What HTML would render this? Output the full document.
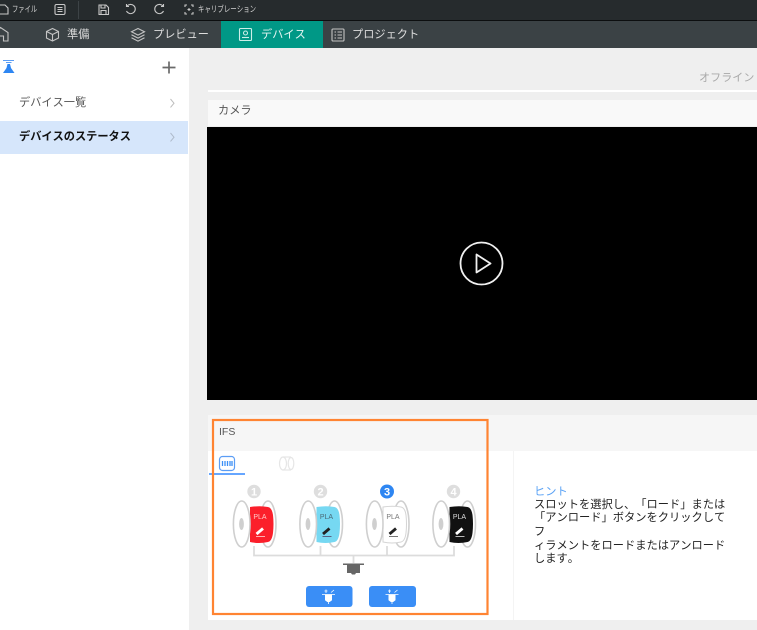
<!DOCTYPE html>
<html lang="ja"><head><meta charset="utf-8"><style>
*{box-sizing:border-box;margin:0;padding:0}
html,body{width:757px;height:630px;overflow:hidden;background:#efefef;font-family:"Liberation Sans","Noto Sans CJK JP",sans-serif;text-spacing-trim:space-all;font-kerning:none}
.a{position:absolute;white-space:nowrap}
svg{position:absolute;left:0;top:0}
</style></head><body>
<div class="a" style="left:0;top:0;width:757px;height:20px;background:#262b2d"></div>
<div class="a" style="left:0;top:20px;width:757px;height:1px;background:#0c0e0f"></div>
<div class="a" style="left:0;top:21px;width:757px;height:27px;background:#3b4245"></div>
<div class="a" style="left:221px;top:21px;width:102px;height:27px;background:#009886"></div>
<div class="a" style="left:12px;top:2px;font-size:8.5px;line-height:14px;color:#d4d4d4;transform:scaleX(.74);transform-origin:0 0">ファイル</div>
<div class="a" style="left:198px;top:2px;font-size:8.5px;line-height:14px;color:#d4d4d4;transform:scaleX(.76);transform-origin:0 0">キャリブレーション</div>
<div class="a" style="left:67px;top:27px;font-size:11.2px;line-height:16px;color:#ddd">準備</div>
<div class="a" style="left:153px;top:27px;font-size:11.2px;line-height:16px;color:#ddd">プレビュー</div>
<div class="a" style="left:261px;top:27px;font-size:11.2px;line-height:16px;color:#e4f5f2">デバイス</div>
<div class="a" style="left:352px;top:27px;font-size:11.2px;line-height:16px;color:#ddd">プロジェクト</div>

<div class="a" style="left:0;top:48px;width:189px;height:582px;background:#fff"></div>
<div class="a" style="left:0;top:121px;width:188px;height:33px;background:#d6e6fb"></div>
<div class="a" style="left:19px;top:95px;font-size:11.2px;line-height:17px;color:#555">デバイス一覧</div>
<div class="a" style="left:19px;top:130px;font-size:11.2px;line-height:15px;color:#111;font-weight:700">デバイスのステータス</div>

<div class="a" style="left:699px;top:70px;font-size:11px;line-height:16px;color:#a8a8a8;letter-spacing:.1px">オフライン</div>
<div class="a" style="left:208px;top:90px;width:549px;height:2px;background:#fff"></div>
<div class="a" style="left:208px;top:100px;width:549px;height:26px;background:#f9f9f9"></div>
<div class="a" style="left:218px;top:104px;font-size:11.2px;line-height:15px;color:#555">カメラ</div>
<div class="a" style="left:207px;top:127px;width:550px;height:273px;background:#000"></div>

<div class="a" style="left:208px;top:415px;width:549px;height:36px;background:#f6f6f6"></div>
<div class="a" style="left:208px;top:451px;width:549px;height:169px;background:#fff"></div>
<div class="a" style="left:513px;top:451px;width:1px;height:169px;background:#f4f4f4"></div>
<div class="a" style="left:219px;top:424px;font-size:10.5px;line-height:16px;color:#555">IFS</div>
<div class="a" style="left:534px;top:485.5px;font-size:11.25px;line-height:13.7px;color:#5aa2f5">ヒント</div>
<div class="a" style="left:534px;top:498.5px;font-size:11.25px;line-height:13.7px;color:#222">スロットを選択し、「ロード」または<br>「アンロード」ボタンをクリックして<br>フ<br>ィラメントをロードまたはアンロード<br>します。</div>

<svg width="757" height="630" viewBox="0 0 757 630" fill="none">
<!-- title bar icons -->
<g stroke="#c8c8c8" stroke-width="1.1">
<path d="M-1 5h6l3 3v6H-1z"/>
<rect x="55" y="4.500" width="10" height="10" rx="1.500"/><path d="M57.500 7.500h5M57.500 9.500h5M57.500 11.500h5"/>
<path d="M99 5h7l2.500 2.500V14.500H99zM101 5v3h4V5M101 14.500v-4h5v4"/>
<path d="M129 6.500h-2.500V4M126.800 6.500A4.600 4.600 0 1 1 126.500 11"/>
<path d="M161 6.500h2.500V4M163.200 6.500A4.600 4.600 0 1 0 163.500 11"/>
<path d="M185 7V5h2M191 5h2v2M193 12v2h-2M187 14h-2v-2"/><path d="M189 8v3M187.500 9.500h3"/>
</g>
<path d="M78.500 1v18" stroke="#3d4346"/>
<!-- tab icons -->
<g stroke="#c4c4c4" stroke-width="1.1">
<path d="M-3 32l3.500-4.500L8 32.500V41H3.500v-5H0"/>
<path d="M52.500 28.500l6 3v6.500l-6 3-6-3v-6.500zM46.500 31.500l6 3 6-3M52.500 34.500v6"/>
<path d="M138 28.500l6.500 3.300-6.500 3.300-6.500-3.300zM131.500 34.800l6.500 3.300 6.500-3.300M131.500 37.800l6.500 3.300 6.500-3.300"/>
<rect x="332" y="29" width="12" height="12" rx="1"/><path d="M334.500 32h1.500M337.500 32h4.500M334.500 35h1.500M337.500 35h4.500M334.500 38h1.500M337.500 38h4.500"/>
</g>
<g stroke="#cdeee8" stroke-width="1.1"><rect x="239.500" y="28.500" width="12" height="12" rx="1"/><circle cx="245.500" cy="33" r="2"/><path d="M242 37.500h7"/></g>
<!-- sidebar -->
<path d="M3 60.500h11M6 62.500h5.500" stroke="#5b9df5" stroke-width="1"/>
<path d="M7.500 64h2.500l1 4h-4.500zM6.500 68h4.500l3.500 5H3z" fill="#2e86f2"/>
<path d="M169 61.500v12M162.500 67.500h13" stroke="#6a6a6a" stroke-width="1.700"/>
<path d="M170.500 99l3.500 4.200-3.500 4.200" stroke="#bdbdbd"/><path d="M170.500 133l3.500 4.200-3.500 4.200" stroke="#aebaca"/>
<!-- play -->
<circle cx="481.500" cy="263.500" r="21" stroke="#f0f0f0" stroke-width="1.800"/>
<path d="M476.500 254.500v18l14-9z" stroke="#f0f0f0" stroke-width="1.800" stroke-linejoin="round"/>
<!-- tabs -->
<rect x="219.500" y="456.500" width="15" height="14" rx="3" stroke="#5b9df5" stroke-width="1.200"/>
<path d="M222.500 461v5M225 461v5M227.500 461v5M230 461v5M232 461v5" stroke="#3a8ef6" stroke-width="1.300"/>
<rect x="209" y="473" width="36" height="2" fill="#66a6ff"/>
<g stroke="#e6e6e6" stroke-width="1.200"><ellipse cx="283" cy="463.500" rx="3.500" ry="6.500"/><ellipse cx="291" cy="463.500" rx="2.800" ry="6"/><path d="M283 457h8M283 470h8"/></g>
<!-- connector -->
<path d="M254 546v9.500h200V546M320.500 546v9.500M387 546v9.500M353.500 555.500V563" stroke="#dcdcdc" stroke-width="1.800"/>
<path d="M343 563.500h21v1.500h-4v8h-4l-1 1.500h-3l-1-1.500h-4v-8h-4z" fill="#666"/>
<!-- spools -->
<g>
<ellipse cx="268" cy="524" rx="8" ry="23" fill="#fff" stroke="#cfcfcf" stroke-width="1.600"/>
<path d="M250 507q10-1.500 18 0 4 .8 5 8 1 9 0 18-1 8-5 9-9 2-18 0z" fill="#fb1f2b"/>
<ellipse cx="241.700" cy="524" rx="8.300" ry="23" fill="#fff" stroke="#cfcfcf" stroke-width="1.600"/>
<ellipse cx="241.500" cy="524" rx="2.400" ry="6" fill="#cfcfcf"/>
</g>
<g transform="translate(66.500 0)">
<ellipse cx="268" cy="524" rx="8" ry="23" fill="#fff" stroke="#cfcfcf" stroke-width="1.600"/>
<path d="M250 507q10-1.500 18 0 4 .8 5 8 1 9 0 18-1 8-5 9-9 2-18 0z" fill="#76d8f2"/>
<ellipse cx="241.700" cy="524" rx="8.300" ry="23" fill="#fff" stroke="#cfcfcf" stroke-width="1.600"/>
<ellipse cx="241.500" cy="524" rx="2.400" ry="6" fill="#cfcfcf"/>
</g>
<g transform="translate(133 0)">
<ellipse cx="268" cy="524" rx="8" ry="23" fill="#fff" stroke="#cfcfcf" stroke-width="1.600"/>
<path d="M250 507q10-1.500 18 0 4 .8 5 8 1 9 0 18-1 8-5 9-9 2-18 0z" fill="#fff" stroke="#d4d4d4"/>
<ellipse cx="241.700" cy="524" rx="8.300" ry="23" fill="#fff" stroke="#cfcfcf" stroke-width="1.600"/>
<ellipse cx="241.500" cy="524" rx="2.400" ry="6" fill="#cfcfcf"/>
</g>
<g transform="translate(199.500 0)">
<ellipse cx="268" cy="524" rx="8" ry="23" fill="#fff" stroke="#cfcfcf" stroke-width="1.600"/>
<path d="M250 507q10-1.500 18 0 4 .8 5 8 1 9 0 18-1 8-5 9-9 2-18 0z" fill="#111"/>
<ellipse cx="241.700" cy="524" rx="8.300" ry="23" fill="#fff" stroke="#cfcfcf" stroke-width="1.600"/>
<ellipse cx="241.500" cy="524" rx="2.400" ry="6" fill="#cfcfcf"/>
</g>
<g font-family="Liberation Sans,sans-serif" font-size="7" text-anchor="middle" textLength="12">
<text x="260" y="519" fill="#ffc8c8">PLA</text>
<text x="326.500" y="519" fill="#4a6a78">PLA</text>
<text x="393" y="519" fill="#777">PLA</text>
<text x="459.500" y="519" fill="#ddd">PLA</text>
</g>
<g stroke-width="2.800"><path d="M256.500 534l6.500-5.500" stroke="#fff"/><path d="M323 534l6.500-5.500" stroke="#222"/><path d="M389.500 534l6.500-5.500" stroke="#222"/><path d="M456 534l6.500-5.500" stroke="#fff"/></g>
<g stroke-width=".9"><path d="M256 536.500h9" stroke="#ffc0c0"/><path d="M322.500 536.500h9" stroke="#557"/><path d="M389 536.500h9" stroke="#666"/><path d="M455.500 536.500h9" stroke="#ccc"/></g>
<!-- numbers -->
<circle cx="254" cy="491.500" r="6.700" fill="#dedede"/><circle cx="320.500" cy="491.500" r="6.700" fill="#dedede"/><circle cx="387" cy="491.500" r="7" fill="#2e86f2"/><circle cx="453.500" cy="491.500" r="6.700" fill="#dedede"/>
<g font-family="Liberation Sans,sans-serif" font-size="11" font-weight="700" text-anchor="middle" fill="#fff">
<text x="254" y="495.500">1</text><text x="320.500" y="495.500">2</text><text x="387" y="495.500">3</text><text x="453.500" y="495.500">4</text></g>
<!-- buttons -->
<rect x="306" y="586" width="46.500" height="21" rx="3" fill="#3a8ef6"/>
<rect x="369" y="586" width="47" height="21" rx="3" fill="#3a8ef6"/>
<g fill="#fff" stroke="#fff" stroke-width="1">
<path d="M325.500 595h6v5l-2 1.500h-2l-2-1.500z"/><path d="M322 594.500h13M328.500 601.500v2.500M326 589.500v3.500M324.500 591h3M331 592.500l3-2.500" fill="none" stroke-width=".8"/>
<path d="M389 595h6v5l-2 1.500h-2l-2-1.500z"/><path d="M385.500 594.500h13M392 601.500v2.500M389.500 589.500v3.500M388 591h3M394.500 592.500l3-2.500" fill="none" stroke-width=".8"/>
</g>
<!-- orange frame -->
<rect x="213" y="420" width="274.500" height="194" stroke="#ff8432" stroke-width="2.200"/>
</svg>
</body></html>
